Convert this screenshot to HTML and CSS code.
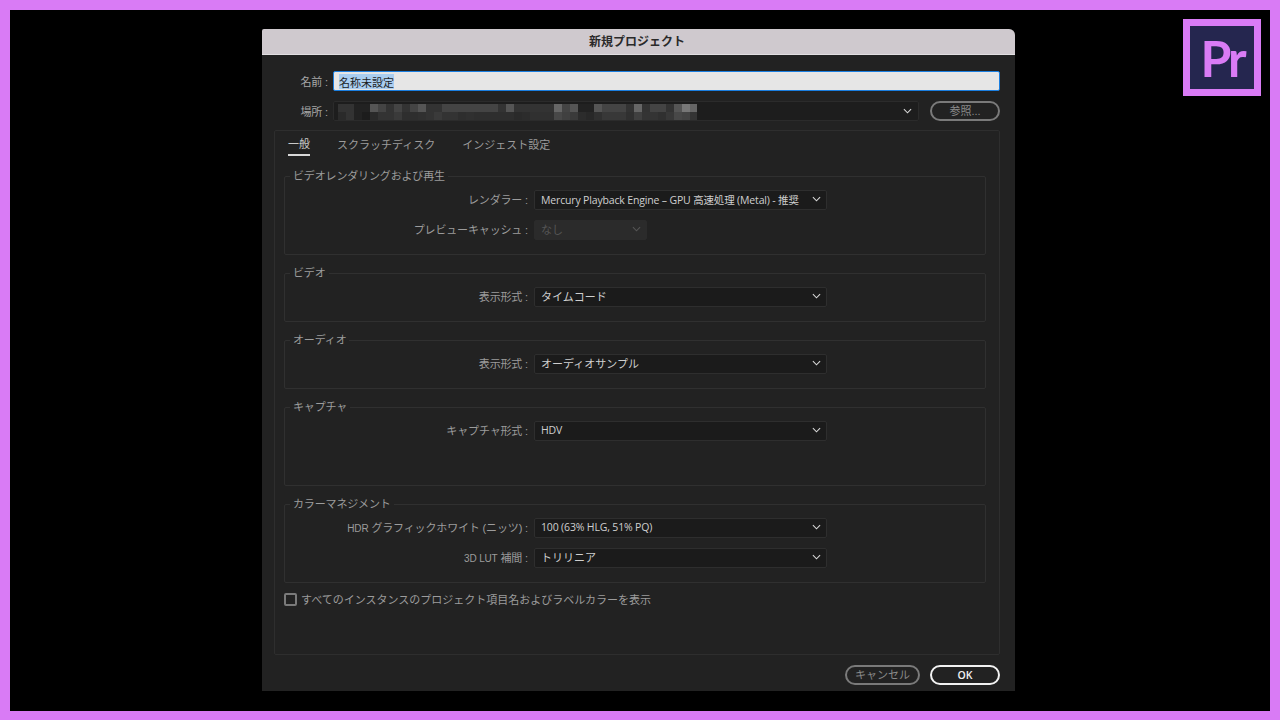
FILE: index.html
```html
<!DOCTYPE html>
<html lang="ja">
<head>
    <meta charset="UTF-8">
    <title>新規プロジェクト</title>
    <link rel="stylesheet" href="styles.css">
</head>
<body>
    <div class="frame">
        <div class="dialog">
            <div class="titlebar">新規プロジェクト</div>
            <div class="dialog-body">
                <div class="top-row name-row">
                    <span class="top-label">名前 :</span>
                    <div class="name-input"><span class="selected">名称未設定</span></div>
                </div>
                <div class="top-row location-row">
                    <span class="top-label">場所 :</span>
                    <div class="location-select">
                        <div class="mosaic"></div>
                        <svg class="chevron" viewBox="0 0 10 6"><path d="M1 1l4 4 4-4"/></svg>
                    </div>
                    <div class="btn browse-btn">参照...</div>
                </div>

                <div class="panel">
                    <div class="tabs">
                        <span class="tab active">一般</span>
                        <span class="tab">スクラッチディスク</span>
                        <span class="tab">インジェスト設定</span>
                    </div>

                    <fieldset class="group group-tall">
                        <legend>ビデオレンダリングおよび再生</legend>
                        <div class="row">
                            <span class="row-label">レンダラー :</span>
                            <div class="select latin"><span>Mercury Playback Engine – GPU 高速処理 (Metal) - 推奨</span><svg class="chevron" viewBox="0 0 10 6"><path d="M1 1l4 4 4-4"/></svg></div>
                        </div>
                        <div class="row">
                            <span class="row-label">プレビューキャッシュ :</span>
                            <div class="select disabled"><span>なし</span><svg class="chevron" viewBox="0 0 10 6"><path d="M1 1l4 4 4-4"/></svg></div>
                        </div>
                    </fieldset>

                    <fieldset class="group group-small">
                        <legend>ビデオ</legend>
                        <div class="row">
                            <span class="row-label">表示形式 :</span>
                            <div class="select"><span>タイムコード</span><svg class="chevron" viewBox="0 0 10 6"><path d="M1 1l4 4 4-4"/></svg></div>
                        </div>
                    </fieldset>

                    <fieldset class="group group-small">
                        <legend>オーディオ</legend>
                        <div class="row">
                            <span class="row-label">表示形式 :</span>
                            <div class="select"><span>オーディオサンプル</span><svg class="chevron" viewBox="0 0 10 6"><path d="M1 1l4 4 4-4"/></svg></div>
                        </div>
                    </fieldset>

                    <fieldset class="group group-tall">
                        <legend>キャプチャ</legend>
                        <div class="row">
                            <span class="row-label">キャプチャ形式 :</span>
                            <div class="select latin"><span>HDV</span><svg class="chevron" viewBox="0 0 10 6"><path d="M1 1l4 4 4-4"/></svg></div>
                        </div>
                    </fieldset>

                    <fieldset class="group group-tall">
                        <legend>カラーマネジメント</legend>
                        <div class="row">
                            <span class="row-label"><span class="label-latin">HDR</span> グラフィックホワイト (ニッツ) :</span>
                            <div class="select latin"><span>100 (63% HLG, 51% PQ)</span><svg class="chevron" viewBox="0 0 10 6"><path d="M1 1l4 4 4-4"/></svg></div>
                        </div>
                        <div class="row">
                            <span class="row-label"><span class="label-latin">3D LUT</span> 補間 :</span>
                            <div class="select"><span>トリリニア</span><svg class="chevron" viewBox="0 0 10 6"><path d="M1 1l4 4 4-4"/></svg></div>
                        </div>
                    </fieldset>

                    <div class="check-row">
                        <span class="checkbox"></span>
                        <span>すべてのインスタンスのプロジェクト項目名およびラベルカラーを表示</span>
                    </div>
                </div>

                <div class="footer">
                    <div class="btn cancel-btn">キャンセル</div>
                    <div class="btn ok-btn">OK</div>
                </div>
            </div>
        </div>
    </div>
    <div class="logo"><span>Pr</span></div>
</body>
</html>
```

FILE: styles.css
```css
* { margin: 0; padding: 0; box-sizing: border-box; }
html, body { width: 1280px; height: 720px; overflow: hidden; }
body { font-family: "Liberation Sans", "Noto Sans CJK JP", sans-serif; font-size: 11px; background: #000; position: relative; }
.frame { width: 1280px; height: 720px; border: solid #d97bf5; border-width: 10px 10px 9px 10px; background: #000; padding: 19px 0 0 252px; }

.dialog { width: 753px; height: 662px; background: #222; display: flex; flex-direction: column; border-radius: 2px 6px 0 0; overflow: hidden; }
.titlebar { height: 26px; flex-shrink: 0; background: #cfc9ce; border-bottom: 1px solid #e2dfe2; color: #2a2a2a; font-size: 12px; font-weight: 700; line-height: 27px; text-align: center; padding-right: 3px; }
.dialog-body { flex: 1; padding: 16px 15px 0 12px; display: flex; flex-direction: column; }

.top-row { display: flex; align-items: center; height: 20px; }
.location-row { margin-top: 10px; }
.top-label { width: 59px; padding-right: 5px; text-align: right; color: #a8a8a8; flex-shrink: 0; letter-spacing: -0.15px; }
.name-input { flex: 1; height: 20px; background: #e6e6e6; border: 1px solid #1a7ee0; border-radius: 2px; padding-left: 5px; display: flex; align-items: center; font-size: 11px; color: #1c1c1c; }
.selected { background: #a9cdf0; display: block; line-height: 12px; padding-top: 3px; }
.location-select { width: 586px; height: 20px; flex-shrink: 0; background: #1d1d1d; border: 1px solid #2b2b2b; border-radius: 2px; display: flex; align-items: center; justify-content: space-between; padding-right: 6px; overflow: hidden; }
.chevron { width: 9px; height: 6px; fill: none; stroke: #d8d8d8; stroke-width: 1.2; flex-shrink: 0; }

/* blurred-out file path, two rows of grey blocks */
.mosaic { width: 359px; height: 17px; margin: 2px 0 0 4px; background:
    linear-gradient(90deg, #333 0 8px, #333 8px 16px, #222 16px 24px, #222 24px 32px, #555 32px 40px, #444 40px 48px, #333 48px 56px, #444 56px 64px, #333 64px 72px, #444 72px 80px, #555 80px 88px, #333 88px 96px, #333 96px 104px, #444 104px 112px, #444 112px 120px, #444 120px 128px, #444 128px 136px, #444 136px 144px, #444 144px 152px, #444 152px 160px, #333 160px 168px, #555 168px 176px, #333 176px 184px, #333 184px 192px, #333 192px 200px, #333 200px 208px, #333 208px 216px, #666 216px 224px, #444 224px 232px, #555 232px 240px, #222 240px 248px, #222 248px 256px, #555 256px 264px, #444 264px 272px, #444 272px 280px, #444 280px 288px, #333 288px 296px, #666 296px 304px, #333 304px 312px, #444 312px 320px, #444 320px 328px, #333 328px 336px, #555 336px 344px, #777 344px 352px, #666 352px 359px) 0 0 / 100% 8px no-repeat,
    linear-gradient(90deg, #2a2a2a 0 8px, #333 8px 16px, #222 16px 24px, #1c1c1c 24px 32px, #2a2a2a 32px 40px, #333 40px 48px, #333 48px 56px, #3a3a3a 56px 64px, #2e2e2e 64px 72px, #2e2e2e 72px 80px, #303030 80px 88px, #333 88px 96px, #3a3a3a 96px 104px, #333 104px 112px, #333 112px 120px, #2e2e2e 120px 128px, #303030 128px 136px, #2e2e2e 136px 176px, #2a2a2a 176px 184px, #2c2c2c 184px 192px, #303030 192px 216px, #484848 216px 224px, #404040 224px 232px, #3a3a3a 232px 240px, #2c2c2c 240px 248px, #282828 248px 256px, #303030 256px 264px, #383838 264px 288px, #303030 288px 296px, #404040 296px 304px, #343434 304px 320px, #303030 320px 328px, #383838 328px 336px, #484848 336px 344px, #444 344px 352px, #343434 352px 359px) 0 8px / 100% 9px no-repeat; }

.btn { height: 20px; flex-shrink: 0; border-radius: 10px; text-align: center; line-height: 17px; font-size: 11px; border: 2px solid #7a7a7a; color: #8a8a8a; }
.browse-btn { width: 70px; margin-left: 11px; }

.panel { height: 525px; margin-top: 9px; border: 1px solid #2e2e2e; border-radius: 2px; padding: 0 13px 0 9px; }
.tabs { display: flex; height: 25px; margin: 5px 0 9px 4px; color: #9c9c9c; font-size: 11px; }
.tab { margin-right: 27px; }
.tab.active { color: #c8c8c8; border-bottom: 2px solid #d8d8d8; height: 20px; line-height: 16px; }

.group { border: 1px solid #303030; border-radius: 2px; margin-bottom: 12px; display: block; min-width: 0; }
.group legend { margin-left: 5px; padding: 0 3px; color: #9c9c9c; font-size: 11px; line-height: 13px; letter-spacing: -0.15px; }
.group-tall { height: 85px; }
.group-small { height: 55px; }

.row { display: flex; align-items: center; height: 20px; margin-top: 10px; }
.group > legend + .row { margin-top: 7px; }
.row-label { width: 249px; padding: 0 6px 2px 0; text-align: right; color: #9c9c9c; flex-shrink: 0; letter-spacing: -0.15px; }
.label-latin { font-size: 10px; }
.select { width: 293px; height: 20px; background: #1b1b1b; border: 1px solid #2e2e2e; border-radius: 2px; display: flex; align-items: center; justify-content: space-between; padding: 0 5px 2px 6px; color: #cfcfcf; font-size: 11px; }
.select.latin { font-family: "Open Sans", "Noto Sans CJK JP", sans-serif; font-size: 10.5px; letter-spacing: -0.16px; }
.select.disabled { width: 113px; background: #2b2b2b; border-color: #2b2b2b; color: #555; }
.select.disabled .chevron { stroke: #555; }

.check-row { display: flex; align-items: center; color: #9c9c9c; margin-top: -4px; }
.checkbox { width: 13px; height: 13px; border: 2px solid #7a7a7a; border-radius: 2px; margin-right: 4px; flex-shrink: 0; }

.footer { display: flex; justify-content: flex-end; margin-top: 10px; }
.cancel-btn { width: 75px; }
.ok-btn { width: 70px; margin-left: 10px; border-color: #f2f2f2; color: #f2f2f2; font-family: "Open Sans", sans-serif; font-size: 10.5px; font-weight: 600; }

.logo { position: absolute; left: 1183px; top: 19px; width: 78px; height: 77px; background: #25264f; border: 7px solid #d97bf5; color: #d97bf5; font-family: Lato, sans-serif; font-weight: 700; font-size: 50px; letter-spacing: -3px; display: flex; align-items: center; justify-content: center; }
```
